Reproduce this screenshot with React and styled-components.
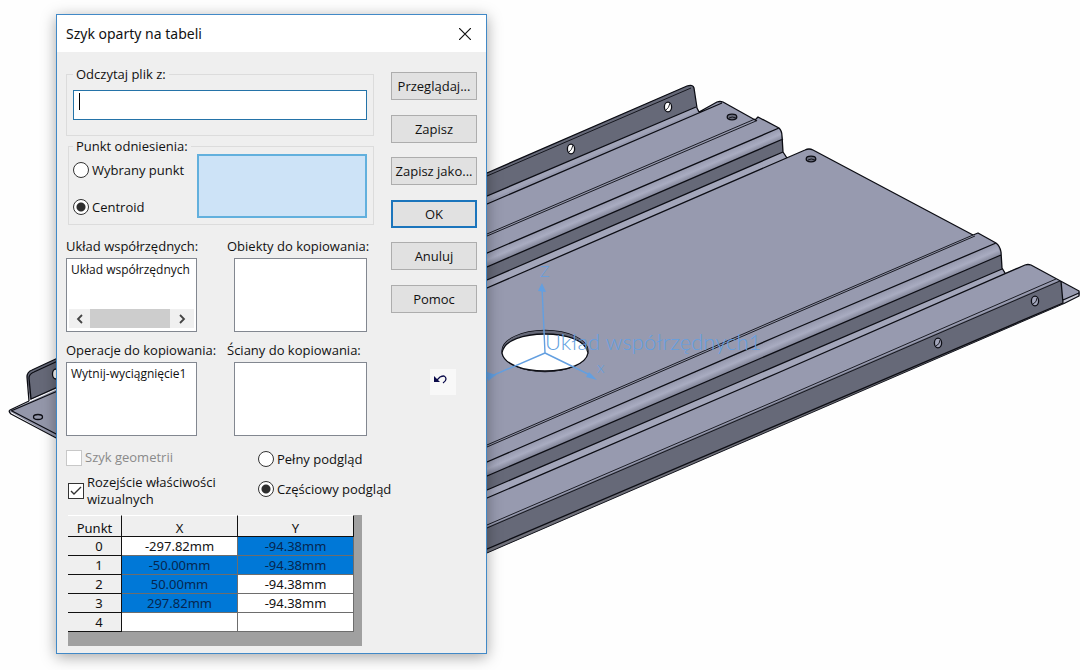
import React, { useState } from "react";
import styled, { createGlobalStyle } from "styled-components";

const GlobalStyle = createGlobalStyle`
  * {
    box-sizing: border-box;
  }
  body {
    margin: 0;
    background-color: #fefefe;
    color: #111;
    font-family: "Open Sans", "Noto Sans", sans-serif;
    font-size: 13px;
    line-height: 16px;
  }
  button,
  input {
    font: inherit;
    color: inherit;
  }
`;

const Viewport = styled.main`
  position: relative;
  min-height: 100vh;
  overflow: hidden;
`;

const Scene = styled.svg`
  display: block;
  width: 100%;
  height: 100vh;
  .edge {
    fill: none;
    stroke: #0c0d14;
    stroke-width: 1.3;
    stroke-linejoin: round;
  }
  .thin {
    fill: none;
    stroke: #0c0d14;
    stroke-width: 0.9;
  }
  .axis {
    fill: none;
    stroke: #639fe0;
    stroke-width: 1.4;
  }
  .arrow {
    fill: #639fe0;
  }
  text {
    fill: #639fe0;
    font-family: Lato, sans-serif;
    font-weight: 300;
    font-size: 22px;
  }
  .axisName {
    font-size: 16px;
  }
`;

const Dialog = styled.form`
  position: absolute;
  left: 56px;
  top: 14px;
  width: 431px;
  background-color: #efefef;
  border: 1px solid #4189c7;
  box-shadow: 0 3px 14px rgba(0, 0, 0, 0.35);
`;

const TitleBar = styled.header`
  display: flex;
  align-items: center;
  justify-content: space-between;
  height: 37px;
  padding: 0 9px;
  background-color: white;
  h1 {
    margin: 0;
    font-family: "Noto Sans", sans-serif;
    font-size: 14px;
    font-weight: 400;
  }
`;

const CloseButton = styled.button`
  display: flex;
  align-items: center;
  justify-content: center;
  width: 24px;
  height: 24px;
  padding: 0;
  border: none;
  background: none;
`;

const Body = styled.div`
  padding: 14px 9px 7px;
`;

const Columns = styled.div`
  display: flex;
  gap: 17px;
`;

const Settings = styled.div`
  flex: 1;
  min-width: 0;
`;

const Group = styled.fieldset`
  min-width: 0;
  margin: ${(props) => (props.$inset ? "2px 0 0 2px" : "0")};
  padding: ${(props) => (props.$inset ? "0 6px 6px 4px" : "8px 6px 15px")};
  border: 1px solid #dcdcdc;
  legend {
    padding: 0 3px;
  }
`;

const PathField = styled.div`
  position: relative;
  input {
    display: block;
    width: 100%;
    height: 30px;
    padding: 2px 6px;
    border: 1px solid #2473a8;
    background-color: white;
    outline: none;
    caret-color: transparent;
  }
`;

const Caret = styled.span`
  position: absolute;
  left: 6px;
  top: 3px;
  width: 1px;
  height: 17px;
  background-color: black;
`;

const Reference = styled.div`
  display: flex;
  justify-content: space-between;
`;

const RadioList = styled.div`
  display: flex;
  flex-direction: column;
  gap: ${(props) => props.$gap};
  padding-top: ${(props) => props.$top};
`;

const Choice = styled.label`
  display: flex;
  align-items: center;
  gap: 3px;
  white-space: nowrap;
  color: ${(props) => (props.$muted ? "#8a8a8a" : "inherit")};
`;

const Radio = styled.input.attrs({ type: "radio" })`
  appearance: none;
  flex: none;
  width: 16px;
  height: 16px;
  margin: 0;
  border: 1px solid #333;
  border-radius: 50%;
  background-color: white;
  &:checked {
    background: radial-gradient(circle, #2e2e2e 4px, white 5px);
  }
`;

const CheckSlot = styled.span`
  display: grid;
  flex: none;
  input {
    appearance: none;
    grid-area: 1 / 1;
    width: 16px;
    height: 16px;
    margin: 0;
    border: 1px solid #333;
    background-color: white;
  }
  input:disabled {
    border-color: #c8c8c8;
  }
  svg {
    grid-area: 1 / 1;
    pointer-events: none;
  }
`;

const PointBox = styled.div`
  width: 170px;
  height: 64px;
  border: 2px solid #62b0dd;
  background-color: #cde3f7;
`;

const Lists = styled.div`
  display: grid;
  grid-template-columns: 161px 140px;
  row-gap: 10px;
  margin-top: 13px;
`;

const ListField = styled.section`
  display: flex;
  flex-direction: column;
  gap: 4px;
  h2 {
    margin: 0;
    font-size: 13px;
    font-weight: 400;
    white-space: nowrap;
  }
`;

const ListBox = styled.div`
  display: flex;
  flex-direction: column;
  justify-content: space-between;
  width: ${(props) => (props.$inset ? "133px" : "131px")};
  height: 74px;
  margin-left: ${(props) => (props.$inset ? "7px" : "0")};
  padding: 3px 2px;
  border: 1px solid #828790;
  background-color: white;
  ul {
    margin: 0;
    padding: 0 0 0 2px;
    list-style: none;
    font-size: 12px;
    white-space: nowrap;
  }
`;

const ScrollBar = styled.div`
  display: grid;
  grid-template-columns: 21px 80px 1fr;
  height: 19px;
  background-color: #f0f0f0;
  button {
    display: flex;
    align-items: center;
    justify-content: center;
    padding: 0;
    border: none;
    background: none;
  }
`;

const Thumb = styled.div`
  background-color: #cdcdcd;
`;

const Side = styled.div`
  display: flex;
  flex-direction: column;
  width: 86px;
  padding-top: 6px;
`;

const Actions = styled.div`
  display: flex;
  flex-direction: column;
  justify-content: space-between;
  height: 241px;
`;

const ActionButton = styled.button`
  height: 28px;
  padding: 0;
  border: ${(props) =>
    props.$primary ? "2px solid #1b75bc" : "1px solid #adadad"};
  background-color: #e1e1e1;
  white-space: nowrap;
`;

const UndoButton = styled.button`
  display: flex;
  width: 26px;
  height: 26px;
  margin: 56px 0 0 39px;
  padding: 4px;
  border: none;
  background-color: #f8f8f8;
`;

const Options = styled.div`
  display: grid;
  grid-template-columns: 192px auto;
  margin-top: 13px;
`;

const Checks = styled.div`
  display: flex;
  flex-direction: column;
  gap: 8px;
  line-height: 17px;
`;

const WrapChoice = styled(Choice)`
  margin-left: 2px;
  white-space: normal;
`;

const TableArea = styled.div`
  width: 294px;
  margin: 7px 0 0 2px;
  padding: 0 8px 14px 0;
  background-color: #a0a0a0;
`;

const PointTable = styled.table`
  width: 100%;
  table-layout: fixed;
  border-collapse: separate;
  border-spacing: 0;
  font-family: "Noto Sans", sans-serif;
  th,
  td {
    height: 19px;
    padding: 0;
    text-align: center;
    font-weight: 400;
    border-right: 1px solid #6d6d6d;
    border-bottom: 1px solid #6d6d6d;
  }
  th {
    background-color: #efefef;
    border-color: #111;
  }
  thead th {
    height: 22px;
    padding-top: 4px;
    border-top: 1px solid white;
  }
  tbody th {
    padding-left: 9px;
  }
  th:first-child {
    width: 54px;
  }
`;

const Cell = styled.td`
  background-color: ${(props) => (props.$selected ? "#0078d7" : "white")};
  background-clip: padding-box;
  color: ${(props) => (props.$selected ? "#06264f" : "#111")};
`;

const actions = [
  "Przeglądaj...",
  "Zapisz",
  "Zapisz jako...",
  "OK",
  "Anuluj",
  "Pomoc",
];

const points = [
  { x: "-297.82mm", y: "-94.38mm", ySelected: true },
  { x: "-50.00mm", y: "-94.38mm", xSelected: true, ySelected: true },
  { x: "50.00mm", y: "-94.38mm", xSelected: true },
  { x: "297.82mm", y: "-94.38mm", xSelected: true },
  { x: "", y: "" },
];

const Model = () => (
  <Scene
    viewBox="0 0 1080 670"
    preserveAspectRatio="xMinYMin meet"
    aria-label="Model"
  >
    <defs>
      <linearGradient
        id="bend"
        gradientUnits="userSpaceOnUse"
        x1="480"
        y1="256"
        x2="485.1"
        y2="267.9"
      >
        <stop offset="0" stopColor="#979aaf" />
        <stop offset="0.5" stopColor="#a9acc1" />
        <stop offset="1" stopColor="#7f8295" />
      </linearGradient>
      <linearGradient
        id="bendLow"
        gradientUnits="userSpaceOnUse"
        x1="480"
        y1="465"
        x2="485.1"
        y2="476.9"
      >
        <stop offset="0" stopColor="#979aaf" />
        <stop offset="0.5" stopColor="#a9acc1" />
        <stop offset="1" stopColor="#7f8295" />
      </linearGradient>
    </defs>

    {/* far corner, left of the dialog */}
    <path d="M9 411 29 402 60 388V440Z" fill="#9497aa" />
    <path d="M27 377Q27 372 32 370L60 357V387L30 400Z" fill="#666978" />
    <path
      className="edge"
      d="M60 357 32 370Q27 372 27 377L29 401M60 360 34 372Q29 374 29 378L31 399L60 386M29 401 10 410Q8 411 11 414L60 440M11 411 60 390M12 411 60 436"
    />
    <ellipse className="edge" cx="38" cy="417" rx="4.5" ry="2.5" />
    <ellipse cx="56" cy="374" rx="3.5" ry="5" fill="white" />
    <ellipse className="edge" cx="56" cy="374" rx="3.5" ry="5" />

    {/* whole sheet */}
    <path
      d="M480 176 687 86Q693 84 694 88L697 108 699 112 717 102Q720 101 723 102L755 120 758 117 779 128Q782 131 782 136L783 152 787 158 805 150Q809 148 813 150L973 235 978 233 996 243Q1000 246 1001 252L1002 268 1005 273 1025 265Q1028 264 1031 265L1080 292V295L1063 304 480 556Z"
      fill="#979aaf"
    />
    {/* back flange */}
    <path
      d="M480 176 687 86Q693 84 694 88L696 107 480 199Z"
      fill="#666978"
    />
    <path d="M480 199 696 107 698 111 480 204Z" fill="#a1a4b8" />
    {/* upper hat */}
    <path d="M480 256 779 128 783 139 480 270Z" fill="url(#bend)" />
    <path d="M480 270 783 139V152L480 283Z" fill="#666978" />
    <path d="M480 283 783 152 786 158 480 291Z" fill="#a3a6ba" />
    {/* lower hat */}
    <path d="M480 465 996 243 1001 255 480 479Z" fill="url(#bendLow)" />
    <path d="M480 479 1001 255 1002 269 480 493Z" fill="#666978" />
    <path d="M480 493 1002 269 1004 274 480 501Z" fill="#a3a6ba" />
    {/* front flange */}
    <path d="M480 530 1058 281 1061 281 1063 303 480 556Z" fill="#666978" />
    <path d="M480 552 1063 302V304L480 556Z" fill="#70717b" />
    <path d="M1063 301 1079 293V296L1063 304Z" fill="#c4c6d2" />

    <path
      className="edge"
      d="M480 176 687 86Q693 84 694 88L697 108 699 112M480 199 696 107M480 207 722 103M699 112 717 102Q720 101 723 102L757 121"
    />
    <path className="thin" d="M480 179 691 88M480 239 756 121M480 237 755 119" />
    <path
      className="edge"
      d="M755 120 758 117 779 128Q782 131 782 136L783 152 787 158M480 256 779 128M480 270 783 139M480 283 783 152M480 291 805 150Q809 148 813 150L973 235"
    />
    <path
      className="edge"
      d="M973 235 978 233 996 243Q1000 246 1001 252L1002 268 1005 273M480 465 780 335 996 243M480 479 1001 255M480 493 1002 269M480 501 780 372 1025 265Q1028 264 1031 265L1079 291V296L1063 304"
    />
    <path
      className="thin"
      d="M480 448 780 318 973 235M480 450 780 320 975 236M480 528 780 399 1056 279M480 531 780 402 1060 281M480 556 1063 304"
    />
    <path
      className="edge"
      d="M480 552 1063 303M1061 281 1063 303M1063 300 1079 293"
    />

    {/* mounting holes */}
    {[
      [571, 149],
      [668, 107],
    ].map(([cx, cy]) => (
      <g key={cx}>
        <ellipse cx={cx} cy={cy} rx="3.6" ry="4.8" fill="white" />
        <ellipse className="edge" cx={cx} cy={cy} rx="3.6" ry="4.8" />
        <path className="thin" d={`M${cx + 2} ${cy - 4}q-1 5 -4 7`} />
      </g>
    ))}
    {[
      [1035, 301],
      [938, 343],
    ].map(([cx, cy]) => (
      <g key={cx}>
        <ellipse cx={cx} cy={cy} rx="3.6" ry="4.8" fill="#a3a6ba" />
        <ellipse className="edge" cx={cx} cy={cy} rx="3.6" ry="4.8" />
        <path className="thin" d={`M${cx + 2} ${cy - 3}q0 4 -4 6`} />
      </g>
    ))}
    {[
      [732, 117],
      [811, 159],
    ].map(([cx, cy]) => (
      <g key={cx}>
        <ellipse cx={cx} cy={cy} rx="4.8" ry="2.8" fill="#666978" />
        <ellipse className="edge" cx={cx} cy={cy} rx="4.8" ry="2.8" />
        <path className="thin" d={`M${cx - 3} ${cy + 1}q3 -2 7 0`} />
      </g>
    ))}

    {/* centre opening */}
    <ellipse className="edge" cx="545" cy="351" rx="43" ry="20.5" />
    <ellipse cx="545" cy="351" rx="43" ry="20.5" fill="#666978" />
    <path
      className="edge"
      d="M502 353C504 340 524 334 545 334S586 340 588 353C586 364 568 371 545 371S504 364 502 353Z"
      style={{ fill: "white" }}
    />

    {/* coordinate system */}
    <path className="axis" d="M545 353 542 287M545 353 487 378M545 353 592 376" />
    <path
      className="arrow"
      d="M542 283 538 291 546 292ZM597 380 589 372 586 377ZM487 372 496 375 488 381Z"
    />
    <text className="axisName" x="540" y="277">
      Z
    </text>
    <text className="axisName" x="597" y="373">
      x
    </text>
    <text x="545" y="350">
      Układ współrzędnych1
    </text>
  </Scene>
);

const App = () => {
  const [path, setPath] = useState("");
  const [origin, setOrigin] = useState("centroid");
  const [preview, setPreview] = useState("partial");
  const [visual, setVisual] = useState(true);

  const onPathChange = (e) => {
    setPath(e.target.value);
  };

  return (
    <>
      <GlobalStyle />
      <Viewport>
        <Model />
        <Dialog onSubmit={(e) => e.preventDefault()}>
          <TitleBar>
            <h1>Szyk oparty na tabeli</h1>
            <CloseButton type="button" aria-label="Zamknij">
              <svg width="12" height="12" stroke="#111" strokeWidth="1.2">
                <path d="M0 0 12 12M12 0 0 12" />
              </svg>
            </CloseButton>
          </TitleBar>
          <Body>
            <Columns>
              <Settings>
                <Group>
                  <legend>
                    <label htmlFor="path">Odczytaj plik z:</label>
                  </legend>
                  <PathField>
                    <input
                      id="path"
                      type="text"
                      value={path}
                      onChange={onPathChange}
                    />
                    <Caret />
                  </PathField>
                </Group>
                <Group $inset>
                  <legend>Punkt odniesienia:</legend>
                  <Reference>
                    <RadioList $gap="21px" $top="8px">
                      <Choice>
                        <Radio
                          name="origin"
                          checked={origin === "point"}
                          onChange={() => setOrigin("point")}
                        />
                        Wybrany punkt
                      </Choice>
                      <Choice>
                        <Radio
                          name="origin"
                          checked={origin === "centroid"}
                          onChange={() => setOrigin("centroid")}
                        />
                        Centroid
                      </Choice>
                    </RadioList>
                    <PointBox />
                  </Reference>
                </Group>
                <Lists>
                  <ListField>
                    <h2>Układ współrzędnych:</h2>
                    <ListBox>
                      <ul>
                        <li>Układ współrzędnych</li>
                      </ul>
                      <ScrollBar>
                        <button type="button" aria-label="W lewo">
                          <svg
                            width="8"
                            height="10"
                            fill="none"
                            stroke="#444"
                            strokeWidth="1.8"
                          >
                            <path d="M6 1 2 5 6 9" />
                          </svg>
                        </button>
                        <Thumb />
                        <button type="button" aria-label="W prawo">
                          <svg
                            width="8"
                            height="10"
                            fill="none"
                            stroke="#444"
                            strokeWidth="1.8"
                          >
                            <path d="M2 1 6 5 2 9" />
                          </svg>
                        </button>
                      </ScrollBar>
                    </ListBox>
                  </ListField>
                  <ListField>
                    <h2>Obiekty do kopiowania:</h2>
                    <ListBox $inset />
                  </ListField>
                  <ListField>
                    <h2>Operacje do kopiowania:</h2>
                    <ListBox>
                      <ul>
                        <li>Wytnij-wyciągnięcie1</li>
                      </ul>
                    </ListBox>
                  </ListField>
                  <ListField>
                    <h2>Ściany do kopiowania:</h2>
                    <ListBox $inset />
                  </ListField>
                </Lists>
              </Settings>
              <Side>
                <Actions>
                  {actions.map((name) => (
                    <ActionButton
                      key={name}
                      type="button"
                      $primary={name === "OK"}
                    >
                      {name}
                    </ActionButton>
                  ))}
                </Actions>
                <UndoButton type="button" aria-label="Cofnij">
                  <svg width="14" height="12" fill="none">
                    <path d="M0 3V9H6Z" fill="#0b0b4a" />
                    <path
                      d="M3 7 6 4Q8 3 10 3Q12 4 12 6T9 10"
                      stroke="#0b0b4a"
                      strokeWidth="1.3"
                    />
                  </svg>
                </UndoButton>
              </Side>
            </Columns>

            <Options>
              <Checks>
                <Choice $muted>
                  <CheckSlot>
                    <input type="checkbox" disabled />
                  </CheckSlot>
                  Szyk geometrii
                </Choice>
                <WrapChoice>
                  <CheckSlot>
                    <input
                      type="checkbox"
                      checked={visual}
                      onChange={() => setVisual(!visual)}
                    />
                    {visual && (
                      <svg
                        width="16"
                        height="16"
                        fill="none"
                        stroke="#333"
                        strokeWidth="1.4"
                      >
                        <path d="M3 8 6 11 13 4" />
                      </svg>
                    )}
                  </CheckSlot>
                  <span>
                    Rozejście właściwości
                    <br />
                    wizualnych
                  </span>
                </WrapChoice>
              </Checks>
              <RadioList $gap="14px" $top="2px">
                <Choice>
                  <Radio
                    name="preview"
                    checked={preview === "full"}
                    onChange={() => setPreview("full")}
                  />
                  Pełny podgląd
                </Choice>
                <Choice>
                  <Radio
                    name="preview"
                    checked={preview === "partial"}
                    onChange={() => setPreview("partial")}
                  />
                  Częściowy podgląd
                </Choice>
              </RadioList>
            </Options>

            <TableArea>
              <PointTable>
                <thead>
                  <tr>
                    <th scope="col">Punkt</th>
                    <th scope="col">X</th>
                    <th scope="col">Y</th>
                  </tr>
                </thead>
                <tbody>
                  {points.map((point, index) => (
                    <tr key={index}>
                      <th scope="row">{index}</th>
                      <Cell $selected={point.xSelected}>{point.x}</Cell>
                      <Cell $selected={point.ySelected}>{point.y}</Cell>
                    </tr>
                  ))}
                </tbody>
              </PointTable>
            </TableArea>
          </Body>
        </Dialog>
      </Viewport>
    </>
  );
};

export default App;
